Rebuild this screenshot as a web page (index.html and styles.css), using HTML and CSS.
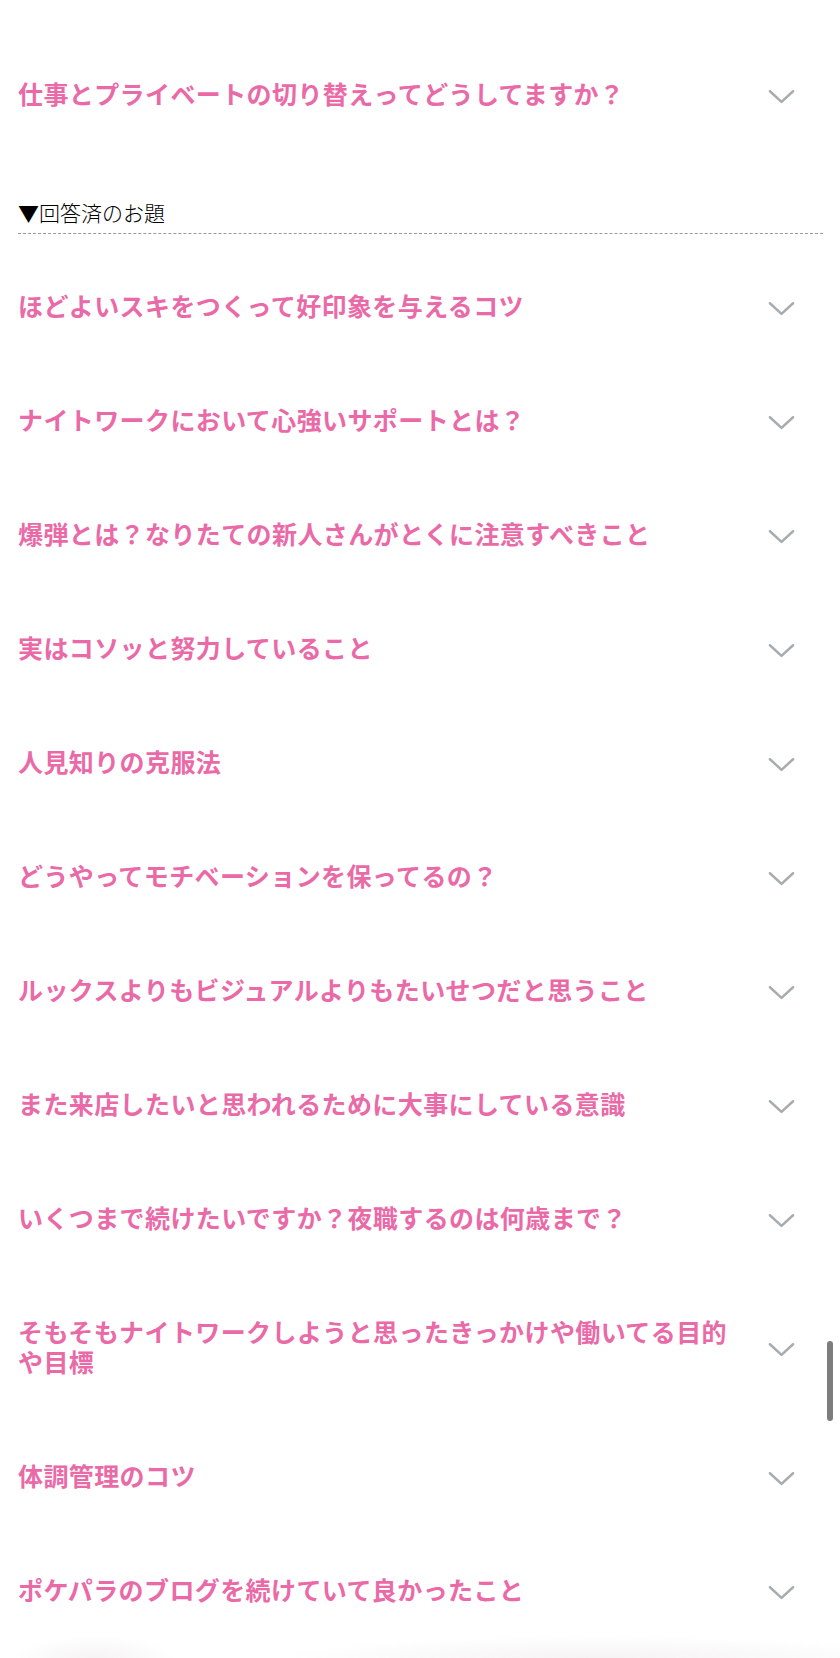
FILE: index.html
```html
<!DOCTYPE html>
<html lang="ja">
<head>
    <meta charset="UTF-8">
    <meta name="viewport" content="width=device-width, initial-scale=1.0">
    <title>お題一覧</title>
    <link rel="stylesheet" href="styles.css">
</head>
<body>
    <div class="theme-list">
        <div class="theme-item">
            <span class="theme-title">仕事とプライベートの切り替えってどうしてますか？</span>
            <svg class="chevron" viewBox="0 0 28 16"><path d="M2 2 L14 13 L26 2"/></svg>
        </div>
    </div>

    <h2 class="section-title">▼回答済のお題</h2>

    <div class="theme-list">
        <div class="theme-item">
            <span class="theme-title">ほどよいスキをつくって好印象を与えるコツ</span>
            <svg class="chevron" viewBox="0 0 28 16"><path d="M2 2 L14 13 L26 2"/></svg>
        </div>
        <div class="theme-item">
            <span class="theme-title">ナイトワークにおいて心強いサポートとは？</span>
            <svg class="chevron" viewBox="0 0 28 16"><path d="M2 2 L14 13 L26 2"/></svg>
        </div>
        <div class="theme-item">
            <span class="theme-title">爆弾とは？なりたての新人さんがとくに注意すべきこと</span>
            <svg class="chevron" viewBox="0 0 28 16"><path d="M2 2 L14 13 L26 2"/></svg>
        </div>
        <div class="theme-item">
            <span class="theme-title">実はコソッと努力していること</span>
            <svg class="chevron" viewBox="0 0 28 16"><path d="M2 2 L14 13 L26 2"/></svg>
        </div>
        <div class="theme-item">
            <span class="theme-title">人見知りの克服法</span>
            <svg class="chevron" viewBox="0 0 28 16"><path d="M2 2 L14 13 L26 2"/></svg>
        </div>
        <div class="theme-item">
            <span class="theme-title">どうやってモチベーションを保ってるの？</span>
            <svg class="chevron" viewBox="0 0 28 16"><path d="M2 2 L14 13 L26 2"/></svg>
        </div>
        <div class="theme-item">
            <span class="theme-title">ルックスよりもビジュアルよりもたいせつだと思うこと</span>
            <svg class="chevron" viewBox="0 0 28 16"><path d="M2 2 L14 13 L26 2"/></svg>
        </div>
        <div class="theme-item">
            <span class="theme-title">また来店したいと思われるために大事にしている意識</span>
            <svg class="chevron" viewBox="0 0 28 16"><path d="M2 2 L14 13 L26 2"/></svg>
        </div>
        <div class="theme-item">
            <span class="theme-title">いくつまで続けたいですか？夜職するのは何歳まで？</span>
            <svg class="chevron" viewBox="0 0 28 16"><path d="M2 2 L14 13 L26 2"/></svg>
        </div>
        <div class="theme-item">
            <span class="theme-title">そもそもナイトワークしようと思ったきっかけや働いてる目的や目標</span>
            <svg class="chevron" viewBox="0 0 28 16"><path d="M2 2 L14 13 L26 2"/></svg>
        </div>
        <div class="theme-item">
            <span class="theme-title">体調管理のコツ</span>
            <svg class="chevron" viewBox="0 0 28 16"><path d="M2 2 L14 13 L26 2"/></svg>
        </div>
        <div class="theme-item">
            <span class="theme-title">ポケパラのブログを続けていて良かったこと</span>
            <svg class="chevron" viewBox="0 0 28 16"><path d="M2 2 L14 13 L26 2"/></svg>
        </div>
    </div>

    <div class="scrollbar"></div>
    <div class="bottom-shade"></div>
</body>
</html>
```

FILE: styles.css
```css
body {
    font-family: "Noto Sans CJK JP", "Noto Sans", sans-serif;
    margin: 0;
    padding-top: 36px;
    background-color: #fff;
}

.theme-item {
    display: flex;
    align-items: center;
    padding: 42px 45px 42px 18px;
}

.theme-title {
    flex: 1;
    font-size: 25px;
    letter-spacing: 0.4px;
    line-height: 30px;
    font-weight: bold;
    color: #ea6aa8;
}

.chevron {
    width: 27px;
    height: 16px;
    margin-left: 30px;
    margin-top: 7px;
    flex-shrink: 0;
}

.chevron path {
    fill: none;
    stroke: #a7acb1;
    stroke-width: 2.6;
    stroke-linecap: round;
    stroke-linejoin: round;
}

.section-title {
    margin: 47px 17px 14px 18px;
    padding-bottom: 6px;
    font-size: 21px;
    line-height: 30px;
    font-weight: 300;
    color: #000;
    border-bottom: 1px dashed #9a9a9a;
}

.scrollbar {
    position: fixed;
    left: 827px;
    top: 1341px;
    width: 6px;
    height: 80px;
    border-radius: 3px;
    background-color: #7d7d7d;
}

.bottom-shade {
    position: fixed;
    left: 0;
    right: 0;
    bottom: 0;
    height: 22px;
    background:
        radial-gradient(ellipse 80px 22px at 95px 100%, rgba(180, 160, 170, 0.12), transparent),
        radial-gradient(ellipse 320px 22px at 600px 100%, rgba(180, 160, 170, 0.12), transparent);
}
```
